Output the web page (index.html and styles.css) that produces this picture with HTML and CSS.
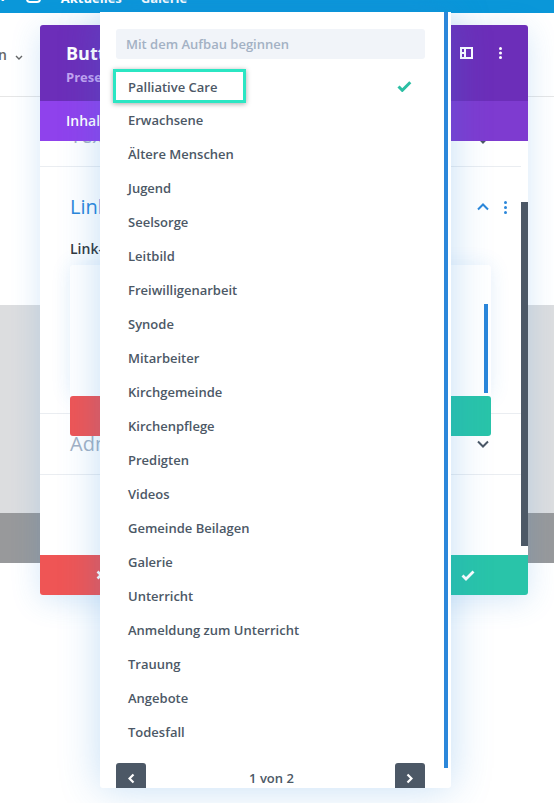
FILE: index.html
```html
<!DOCTYPE html>
<html lang="de">
<head>
<meta charset="utf-8">
<title>Button Einstellungen</title>
<link rel="stylesheet" href="styles.css">
</head>
<body>
<div class="page">
  <div class="topbar">
    <span class="fb">f</span>
    <span class="ig"></span>
    <span class="nav nav-first">Aktuelles</span>
    <span class="nav nav-second">Galerie</span>
  </div>
  <div class="masthead">
    <div class="menu-clip"><span class="menu-item">Veranstaltungen</span></div>
    <svg class="menu-chev" width="8" height="5" viewBox="0 0 8 5"><path d="M1 1l3 3 3-3" fill="none" stroke="#666" stroke-width="1.4"/></svg>
  </div>
  <div class="spacer"></div>
  <div class="band-light"></div>
  <div class="band-dark"></div>
</div>

<div class="modal">
  <div class="modal-head">
    <div class="titles">
      <div class="title">Button Einstellungen</div>
      <div class="subtitle">Preset: Standard</div>
    </div>
    <div class="head-icons">
      <svg width="13" height="12" viewBox="0 0 13 12"><rect x="1" y="1" width="11" height="10" fill="none" stroke="#fff" stroke-width="2"/><path d="M5 1v10M1 6h4" stroke="#fff" stroke-width="2"/></svg>
      <svg width="3" height="12" viewBox="0 0 3 12"><circle cx="1.5" cy="1.5" r="1.5" fill="#fff"/><circle cx="1.5" cy="6" r="1.5" fill="#fff"/><circle cx="1.5" cy="10.5" r="1.5" fill="#fff"/></svg>
    </div>
  </div>
  <div class="tabs">
    <span class="tab active">Inhalt</span>
    <span class="tab">Design</span>
    <span class="tab">Erweitert</span>
  </div>
  <div class="modal-body">
    <div class="scroll">
      <div class="toggle toggle-first">
        <div class="toggle-head">
          <span class="toggle-title">Text</span>
          <span class="toggle-icons"><svg width="12" height="8" viewBox="0 0 12 8"><path d="M1 1.5l5 5 5-5" fill="none" stroke="#4c5866" stroke-width="2"/></svg></span>
        </div>
      </div>
      <div class="toggle toggle-open">
        <div class="toggle-head">
          <span class="toggle-title open">Link</span>
          <span class="toggle-icons wide">
            <svg width="12" height="8" viewBox="0 0 12 8"><path d="M1 6.5l5-5 5 5" fill="none" stroke="#2b87da" stroke-width="2"/></svg>
            <svg width="3" height="13" viewBox="0 0 3 13"><circle cx="1.5" cy="1.5" r="1.5" fill="#2b87da"/><circle cx="1.5" cy="6.5" r="1.5" fill="#2b87da"/><circle cx="1.5" cy="11.5" r="1.5" fill="#2b87da"/></svg>
          </span>
        </div>
        <div class="field-label">Link-URL</div>
        <div class="field">
          <div class="picker">
            <div class="picker-box"><span class="picker-bar"></span></div>
            <div class="picker-actions">
              <span class="pbtn red"></span>
              <span class="pbtn teal"></span>
            </div>
          </div>
        </div>
      </div>
      <div class="toggle">
        <div class="toggle-head">
          <span class="toggle-title">Admin Label</span>
          <span class="toggle-icons"><svg width="12" height="8" viewBox="0 0 12 8"><path d="M1 1.5l5 5 5-5" fill="none" stroke="#4c5866" stroke-width="2"/></svg></span>
        </div>
      </div>
    </div>
    <div class="body-scrollbar"></div>
  </div>
  <div class="modal-foot">
    <span class="fbtn close"><svg width="10" height="10" viewBox="0 0 10 10"><path d="M1.5 1.5l7 7M8.5 1.5l-7 7" stroke="#fff" stroke-width="2.6"/></svg></span>
    <span class="fbtn undo"></span>
    <span class="fbtn redo"></span>
    <span class="fbtn save"><svg width="14" height="11" viewBox="0 0 14 11"><path d="M1.5 5.5l3.5 3.5 7.5-7.5" fill="none" stroke="#fff" stroke-width="2.8"/></svg></span>
  </div>
</div>

<div class="dropdown">
  <div class="dd-main">
    <input class="search" type="text" placeholder="Mit dem Aufbau beginnen">
    <ul class="options">
      <li class="opt"><span>Palliative Care</span><svg width="15" height="11" viewBox="0 0 15 11"><path d="M1.5 5.5l3.8 3.8 8-8" fill="none" stroke="#2cbfa4" stroke-width="3"/></svg></li>
      <li class="opt">Erwachsene</li>
      <li class="opt">Ältere Menschen</li>
      <li class="opt">Jugend</li>
      <li class="opt">Seelsorge</li>
      <li class="opt">Leitbild</li>
      <li class="opt">Freiwilligenarbeit</li>
      <li class="opt">Synode</li>
      <li class="opt">Mitarbeiter</li>
      <li class="opt">Kirchgemeinde</li>
      <li class="opt">Kirchenpflege</li>
      <li class="opt">Predigten</li>
      <li class="opt">Videos</li>
      <li class="opt">Gemeinde Beilagen</li>
      <li class="opt">Galerie</li>
      <li class="opt">Unterricht</li>
      <li class="opt">Anmeldung zum Unterricht</li>
      <li class="opt">Trauung</li>
      <li class="opt">Angebote</li>
      <li class="opt">Todesfall</li>
    </ul>
    <div class="pager">
      <span class="pg-btn"><svg width="7" height="11" viewBox="0 0 7 11"><path d="M5.5 1.5l-4 4 4 4" fill="none" stroke="#fff" stroke-width="2.2"/></svg></span>
      <span class="pg-text">1 von 2</span>
      <span class="pg-btn"><svg width="7" height="11" viewBox="0 0 7 11"><path d="M1.5 1.5l4 4-4 4" fill="none" stroke="#fff" stroke-width="2.2"/></svg></span>
    </div>
  </div>
  <div class="dd-scrollbar"></div>
  <div class="annot"></div>
</div>
</body>
</html>
```

FILE: styles.css
```css
* { box-sizing: border-box; }
html, body { margin: 0; padding: 0; }
body {
  width: 554px;
  height: 803px;
  overflow: hidden;
  position: relative;
  background: #fff;
  font-family: "Open Sans", "Liberation Sans", sans-serif;
}

/* ---------- background page ---------- */
.topbar {
  height: 13px;
  background: #0a97d9;
  display: flex;
  align-items: flex-start;
  overflow: hidden;
  color: #fff;
  font-weight: 700;
  font-size: 13px;
}
.fb { font-size: 15px; line-height: 16px; margin-top: -13px; margin-left: 0; }
.ig {
  width: 15px; height: 15px;
  border: 2px solid #fff;
  border-radius: 4px;
  margin-top: -12px;
  margin-left: 20px;
}
.nav { line-height: 16px; margin-top: -10px; }
.nav-first { margin-left: 20px; }
.nav-second { margin-left: 19px; }

.masthead {
  height: 84px;
  border-bottom: 1px solid #e6e6e6;
  display: flex;
  align-items: flex-start;
  padding-top: 32px;
}
.menu-clip {
  width: 7px;
  overflow: hidden;
  display: flex;
  justify-content: flex-end;
}
.menu-item { white-space: nowrap; font-size: 14px; line-height: 20px; color: #666; font-weight: 600; }
.menu-chev { margin-left: 8px; margin-top: 10px; }

.spacer { height: 208px; }
.band-light { height: 208px; background: #dcdddf; }
.band-dark { height: 50px; background: #98999b; }

/* ---------- modal ---------- */
.modal {
  position: absolute;
  left: 40px;
  top: 25px;
  width: 488px;
  height: 570px;
  border-radius: 3px;
  overflow: hidden;
  background: #fff;
  display: flex;
  flex-direction: column;
  box-shadow: 0 5px 30px rgba(43, 135, 218, 0.2);
}
.modal-head {
  height: 76px;
  flex: none;
  background: #6c2eb9;
  display: flex;
  justify-content: space-between;
  align-items: flex-start;
  padding: 16px 26px 0 26px;
}
.title { color: #fff; font-size: 18px; font-weight: 700; line-height: 24px; white-space: nowrap; }
.subtitle { color: #c4a3f0; font-size: 13px; font-weight: 700; line-height: 16px; margin-top: 4px; }
.head-icons { display: flex; align-items: center; gap: 26px; margin-top: 6px; }

.tabs {
  height: 40px;
  flex: none;
  background: #7e3bd0;
  display: flex;
}
.tab {
  padding: 0 26px;
  line-height: 40px;
  color: #fff;
  font-size: 14px;
  font-weight: 600;
}
.tab.active { background: #8f42ec; }

.modal-body {
  flex: 1;
  display: flex;
  overflow: hidden;
}
.scroll { flex: 1; min-width: 0; }
.body-scrollbar {
  width: 7px;
  flex: none;
  margin-top: 61px;
  height: 344px;
  background: #4c5866;
}

.toggle {
  padding: 20px 30px;
  border-bottom: 1px solid #eaedf1;
}
.toggle-first { margin-top: -35px; }
.toggle-open { padding: 30px 30px 0 30px; }
.toggle-head {
  display: flex;
  align-items: center;
  justify-content: space-between;
  height: 20px;
}
.toggle-title {
  font-size: 20px;
  line-height: 20px;
  color: #a3b1c4;
  white-space: nowrap;
}
.toggle-title.open { color: #2b87da; }
.toggle-icons { display: flex; align-items: center; gap: 15px; margin-right: 2px; }
.toggle-icons.wide { margin-right: -16px; }
.toggle-icons svg { display: block; }
.toggle-first .toggle-icons { margin-top: 8px; }

.field-label {
  margin-top: 22px;
  font-size: 14px;
  line-height: 20px;
  font-weight: 600;
  color: #32373c;
}
.field { height: 154px; position: relative; }
.picker {
  position: absolute;
  left: 0; right: 0; top: 6px;
  z-index: 1;
}
.picker-box {
  height: 131px;
  background: #fff;
  border-radius: 3px 3px 0 0;
  display: flex;
  justify-content: flex-end;
  padding: 39px 3px 3px 0;
  box-shadow: 0 0 20px rgba(43, 135, 218, 0.12);
}
.picker-bar { width: 4px; background: #2b87da; }
.picker-actions { display: flex; height: 40px; }
.pbtn { flex: 1; border-radius: 3px; }
.pbtn.red { background: #ef5555; }
.pbtn.teal { background: #29c4a9; }

.modal-foot {
  height: 40px;
  flex: none;
  display: flex;
}
.fbtn { flex: 1; display: flex; align-items: center; justify-content: center; }
.fbtn.close { background: #ef5555; padding-right: 4px; }
.fbtn.undo { background: #7e3bd0; }
.fbtn.redo { background: #2b87da; }
.fbtn.save { background: #29c4a9; }

/* ---------- dropdown ---------- */
.dropdown {
  position: absolute;
  left: 100px;
  top: 12px;
  width: 351px;
  height: 776px;
  background: #fff;
  border-radius: 0 0 3px 3px;
  overflow: hidden;
  display: flex;
  box-shadow: 0 0 40px rgba(43, 135, 218, 0.28);
  z-index: 2;
}
.dd-main {
  flex: 1;
  min-width: 0;
  padding: 17px 19px 0 16px;
}
.dd-scrollbar {
  width: 4px;
  flex: none;
  height: 756px;
  margin-right: 3px;
  background: #2b87da;
}
.search {
  display: block;
  width: 100%;
  height: 30px;
  border: 0;
  outline: 0;
  border-radius: 3px;
  background: #f1f4f9;
  padding: 0 10px;
  font-family: inherit;
  font-size: 13px;
  font-weight: 600;
  color: #4c5866;
}
.search::placeholder { color: #a3b1c4; opacity: 1; }
.options { list-style: none; margin: 10px 0 0 0; padding: 0; }
.opt {
  height: 34px;
  line-height: 34px;
  padding: 0 13px 0 12px;
  font-size: 13px;
  font-weight: 600;
  color: #4c5866;
  display: flex;
  align-items: center;
  justify-content: space-between;
  white-space: nowrap;
}
.opt span { line-height: 34px; padding-top: 1px; }
.pager {
  margin-top: 14px;
  height: 30px;
  display: flex;
  align-items: center;
  justify-content: space-between;
}
.pg-btn {
  width: 30px;
  height: 30px;
  border-radius: 3px;
  background: #4c5866;
  display: flex;
  align-items: center;
  justify-content: center;
}
.pg-text { font-size: 13px; font-weight: 600; color: #4c5866; padding-left: 2px; }
.annot {
  position: absolute;
  left: 13px;
  top: 57px;
  width: 133px;
  height: 34px;
  border: 3px solid #2be6c3;
  box-shadow: 0 1px 5px rgba(0, 0, 0, 0.35);
}
```
